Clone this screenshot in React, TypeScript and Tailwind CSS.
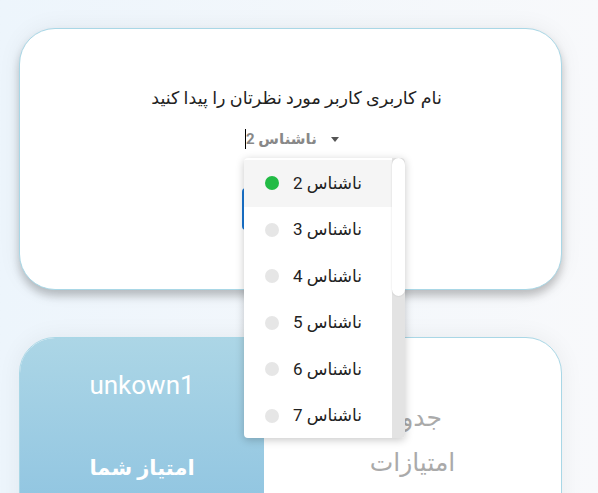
import React from 'react';

const users = [2, 3, 4, 5, 6, 7];

const fa = { fontFamily: "Roboto, 'DejaVu Sans', sans-serif" };

export default function App() {
  const selected = 2;

  return (
    <div className="relative min-h-screen overflow-hidden bg-gradient-to-r from-[#edf5fc] to-[#f8f9fb]" style={fa}>
      {/* Search card */}
      <div className="ml-[19px] mt-[28px] h-[262px] w-[543px] rounded-[36px] border border-[#a9d7e6] bg-white shadow-[0_6px_9px_rgba(0,0,0,0.22),0_0_24px_rgba(0,0,0,0.06)]">
        <div dir="rtl" className="pl-[12px] pt-[57px] text-center text-[17.5px] leading-[24px] text-[#222]">
          نام کاربری کاربر مورد نظرتان را پیدا کنید
        </div>
        <div className="ml-[225px] mt-[17px] flex h-[24px] w-[161px] items-center">
          <span className="h-[20px] w-px bg-black" />
          <span dir="rtl" className="text-[15px] font-bold text-[#888]">ناشناس 2</span>
          <svg className="ml-[14px]" width="8" height="5" viewBox="0 0 8 5">
            <path d="M0 0h8L4 5z" fill="#555" />
          </svg>
        </div>
        <button className="ml-[222px] mt-[37px] h-[42px] w-[97px] rounded-[4px] bg-[#1976d2] text-sm font-medium text-white">
          جستجو
        </button>
      </div>

      {/* Score card */}
      <div className="ml-[19px] mt-[47px] flex h-[200px] w-[543px] overflow-hidden rounded-t-[36px] border border-[#a9d7e6] bg-white shadow-[0_0_24px_rgba(0,0,0,0.06)]">
        <div className="flex w-[244px] flex-col items-center bg-gradient-to-b from-[#acd6e6] to-[#8cc2e0] pt-[31px] text-white">
          <div className="text-[26px] leading-[32px]">unkown1</div>
          <div dir="rtl" className="mt-[51px] text-[21px] font-bold leading-[32px]">امتیاز شما</div>
        </div>
        <div dir="rtl" className="flex-1 pt-[57px] text-center text-[25px] leading-[45px] text-[#aaa]">
          جدول
          <br />
          امتیازات
        </div>
      </div>

      {/* Dropdown list */}
      <div className="absolute left-[244px] top-[158px] flex h-[280px] w-[161px] overflow-hidden rounded-[4px] bg-white shadow-[0_2px_8px_rgba(0,0,0,0.22)]">
        <ul className="flex-1 pt-[2px]">
          {users.map(n => (
            <li
              key={n}
              className={`flex h-[46.5px] items-center pl-[21px] ${n === selected ? 'bg-[#f5f5f5]' : ''}`}
            >
              <span className={`h-[14px] w-[14px] rounded-full ${n === selected ? 'bg-[#22bb45]' : 'bg-[#e6e6e6]'}`} />
              <span dir="rtl" className="ml-[14px] text-[17px] text-[#222]">ناشناس {n}</span>
            </li>
          ))}
        </ul>
        <div className="w-[13px] bg-[#e3e3e3]">
          <div className="h-[138px] w-full rounded-full bg-white shadow-[0_0_2px_rgba(0,0,0,0.15)]" />
        </div>
      </div>
    </div>
  );
}
